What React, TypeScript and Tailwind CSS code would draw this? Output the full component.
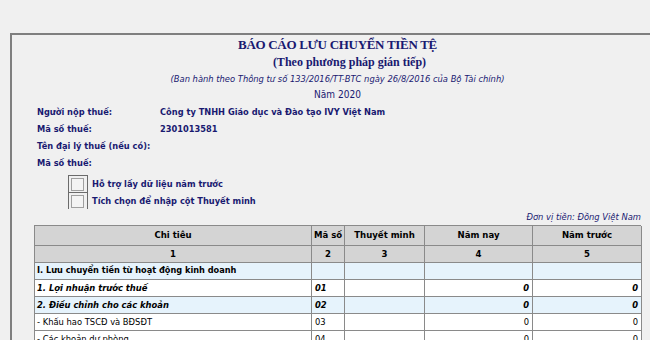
const FONT = "font-['DejaVu_Sans_Condensed','DejaVu_Sans',sans-serif]";

type Row = {
  label: string;
  code: string;
  kind: "section" | "bold" | "plain";
  shade: boolean;
  values: [string, string] | null;
};

const rows: Row[] = [
  { label: "I. Lưu chuyển tiền từ hoạt động kinh doanh", code: "", kind: "section", shade: true, values: null },
  { label: "1. Lợi nhuận trước thuế", code: "01", kind: "bold", shade: false, values: ["0", "0"] },
  { label: "2. Điều chỉnh cho các khoản", code: "02", kind: "bold", shade: true, values: ["0", "0"] },
  { label: "- Khấu hao TSCĐ và BĐSĐT", code: "03", kind: "plain", shade: false, values: ["0", "0"] },
  { label: "- Các khoản dự phòng", code: "04", kind: "plain", shade: false, values: ["0", "0"] },
];

const info = [
  { label: "Người nộp thuế:", value: "Công ty TNHH Giáo dục và Đào tạo IVY Việt Nam" },
  { label: "Mã số thuế:", value: "2301013581" },
  { label: "Tên đại lý thuế (nếu có):", value: "" },
  { label: "Mã số thuế:", value: "" },
];

const cols = "grid grid-cols-[277px_33px_80px_108px_109px]";
const cell = "flex items-center overflow-visible whitespace-nowrap border-b border-r border-[#8a8a8a]";

function CheckRow({ text }: { text: string }) {
  return (
    <div className="flex h-[17px] items-center">
      <div className="flex h-[17px] w-[20px] items-center border-l border-t border-r border-[#6b6b6b] pl-[2px]">
        <div className="h-[13px] w-[13px] border border-[#a0a0a0] bg-[#f4f4f4]" />
      </div>
      <span className="pl-[4px] text-[9.2px] font-bold text-[#191970]">{text}</span>
    </div>
  );
}

export default function App() {
  return (
    <div className={`h-[340px] w-[650px] overflow-hidden bg-[#f0f0f0] pl-[10px] pt-[33px] ${FONT}`}>
      <div className="h-[320px] border-l-2 border-t-2 border-[#7f7f7f] pl-[22px] pr-[9px]">
        <div className="flex flex-col items-center text-[#191970]">
          <div className="h-[19px] font-['Liberation_Serif',serif] text-[13px] font-bold leading-[19px] tracking-[-0.3px]">
            BÁO CÁO LƯU CHUYỂN TIỀN TỆ
          </div>
          <div className="h-[16px] pl-[24px] font-['Liberation_Serif',serif] text-[12px] font-bold leading-[16px]">
            (Theo phương pháp gián tiếp)
          </div>
          <div className="h-[17px] text-[9.3px] italic leading-[17px]">
            (Ban hành theo Thông tư số 133/2016/TT-BTC ngày 26/8/2016 của Bộ Tài chính)
          </div>
          <div className="h-[16px] text-[10px] leading-[16px]">Năm 2020</div>
        </div>

        <div className="pl-[3px]">
          {info.map((item, i) => (
            <div key={i} className="flex h-[17px] items-center whitespace-nowrap text-[9.2px] font-bold text-[#191970]">
              <span className="w-[123px] shrink-0">{item.label}</span>
              <span>{item.value}</span>
            </div>
          ))}
        </div>

        <div className="mt-[4px] pl-[34px]">
          <CheckRow text="Hỗ trợ lấy dữ liệu năm trước" />
          <CheckRow text="Tích chọn để nhập cột Thuyết minh" />
        </div>

        <div className="flex h-[16px] items-center justify-end text-[9.3px] italic text-[#191970]">
          Đơn vị tiền: Đồng Việt Nam
        </div>

        <div className="border-l border-t border-[#8a8a8a] text-[9.3px] text-black">
          <div className={`${cols} h-[20px] bg-[#d4d4d4] text-[9.5px] font-bold`}>
            {["Chi tiêu", "Mã số", "Thuyết minh", "Năm nay", "Năm trước"].map((h) => (
              <div key={h} className={`${cell} justify-center`}>
                {h}
              </div>
            ))}
          </div>
          <div className={`${cols} h-[17px] bg-[#d4d4d4] text-[9.5px] font-bold`}>
            {["1", "2", "3", "4", "5"].map((h) => (
              <div key={h} className={`${cell} justify-center`}>
                {h}
              </div>
            ))}
          </div>
          {rows.map((r) => {
            const bg = r.shade ? "bg-[#e6f3fc]" : "bg-white";
            const emph = r.kind === "bold" ? "text-[9.3px] font-bold italic" : "";
            const weight = r.kind === "section" ? "text-[9.1px] font-bold" : emph;
            return (
              <div key={r.label} className={`${cols} h-[17px] ${bg}`}>
                <div className={`${cell} pl-[2px] ${weight}`}>{r.label}</div>
                <div className={`${cell} pl-[3px] ${emph}`}>{r.code}</div>
                <div className={cell} />
                {[0, 1].map((k) => (
                  <div key={k} className={`${cell} justify-end pr-[3px] ${emph}`}>
                    {r.values ? r.values[k] : ""}
                  </div>
                ))}
              </div>
            );
          })}
        </div>
      </div>
    </div>
  );
}
